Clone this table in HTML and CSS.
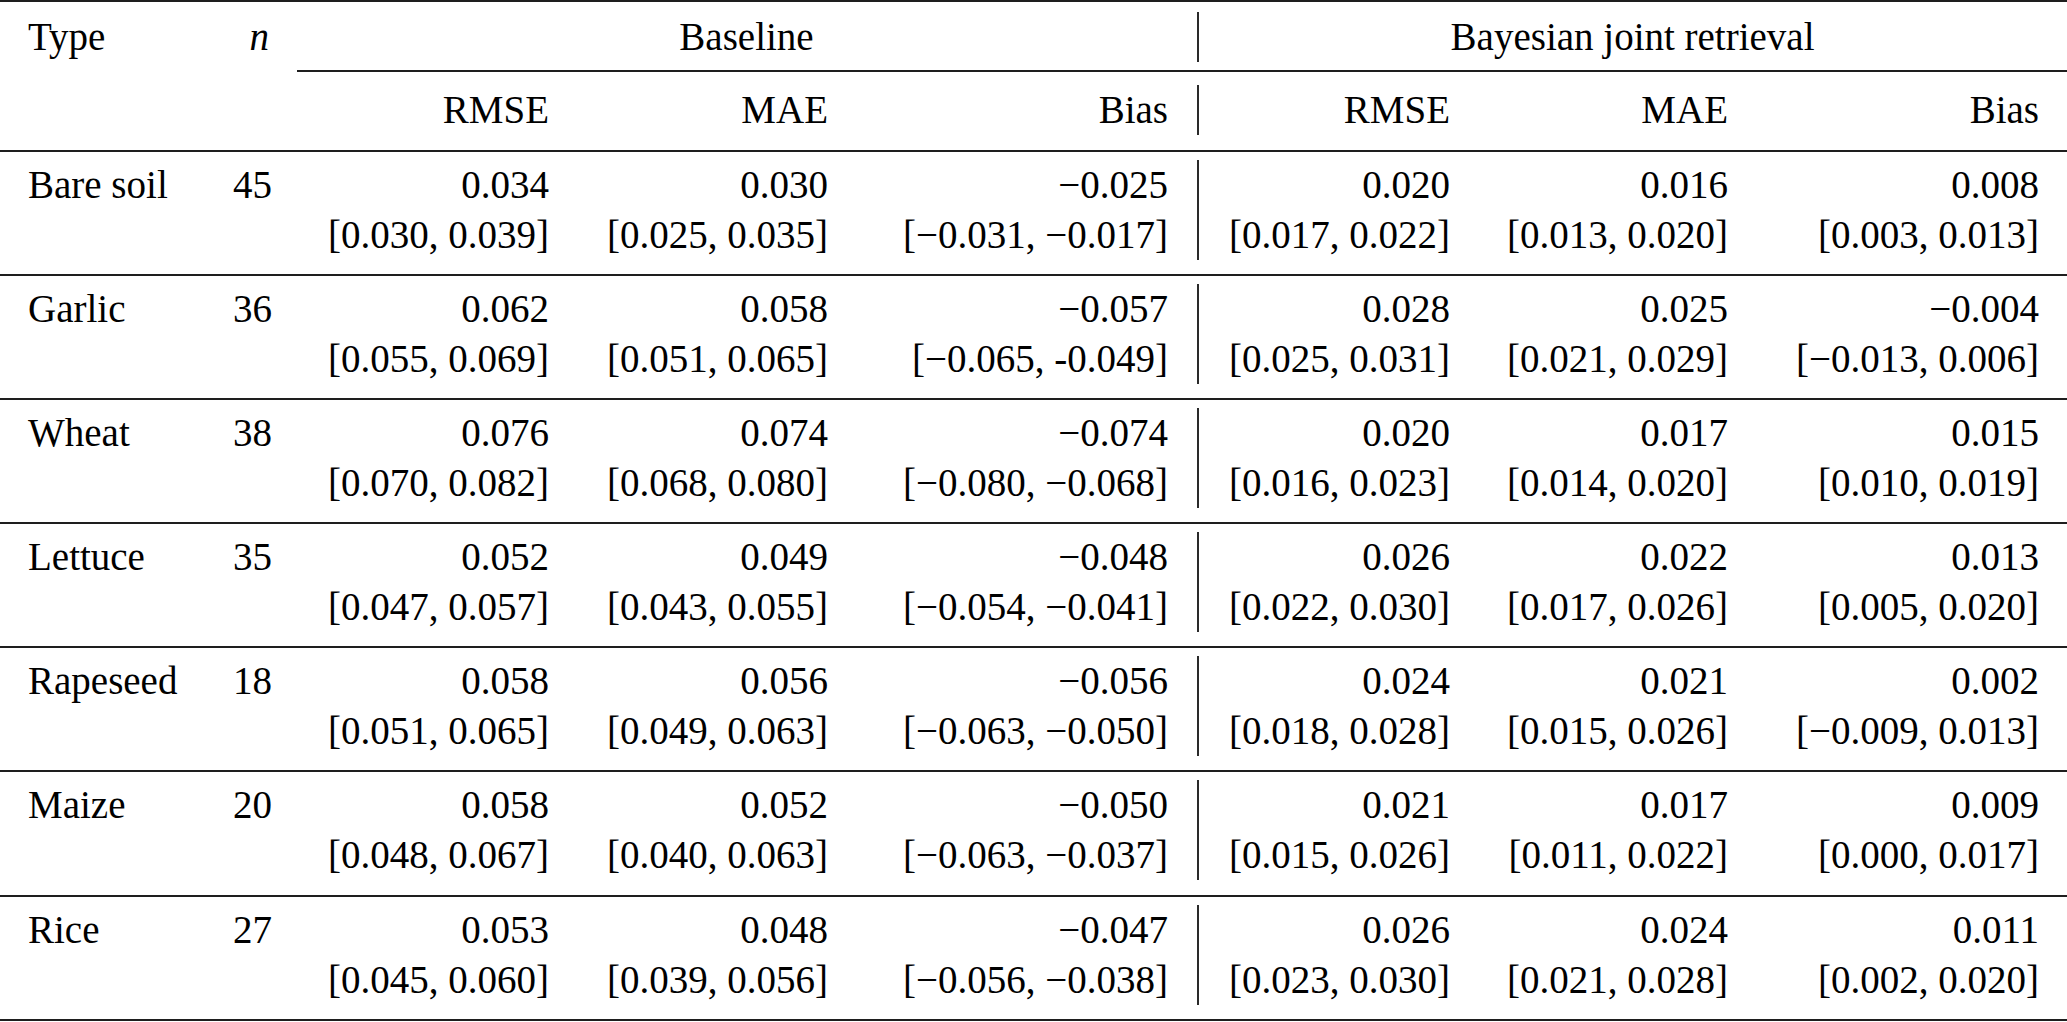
FILE: index.html
```html
<!DOCTYPE html>
<html lang="en">
<head>
<meta charset="utf-8">
<title>Retrieval accuracy by crop type</title>
<link rel="stylesheet" href="styles.css">
</head>
<body>
<table class="results">
  <colgroup>
    <col class="c-type">
    <col class="c-n">
    <col class="c-rmse">
    <col class="c-mae">
    <col class="c-bias">
    <col class="c-rmse2">
    <col class="c-mae2">
    <col class="c-bias2">
  </colgroup>
  <thead>
    <tr class="h1">
      <th class="left" rowspan="2">Type</th>
      <th class="right" rowspan="2"><i>n</i></th>
      <th class="group" colspan="3">Baseline</th>
      <th class="group sep" colspan="3"><div class="rule center">Bayesian joint retrieval</div></th>
    </tr>
    <tr class="h2">
      <th class="right">RMSE</th>
      <th class="right">MAE</th>
      <th class="right">Bias</th>
      <th class="right sep"><div class="rule">RMSE</div></th>
      <th class="right">MAE</th>
      <th class="right">Bias</th>
    </tr>
  </thead>
  <tbody>
    <tr>
      <td class="left">Bare soil</td><td class="right">45</td>
      <td class="right"><div>0.034</div><div>[0.030, 0.039]</div></td>
      <td class="right"><div>0.030</div><div>[0.025, 0.035]</div></td>
      <td class="right"><div>&minus;0.025</div><div>[&minus;0.031, &minus;0.017]</div></td>
      <td class="right sep"><div class="rule"><div>0.020</div><div>[0.017, 0.022]</div></div></td>
      <td class="right"><div>0.016</div><div>[0.013, 0.020]</div></td>
      <td class="right"><div>0.008</div><div>[0.003, 0.013]</div></td>
    </tr>
    <tr>
      <td class="left">Garlic</td><td class="right">36</td>
      <td class="right"><div>0.062</div><div>[0.055, 0.069]</div></td>
      <td class="right"><div>0.058</div><div>[0.051, 0.065]</div></td>
      <td class="right"><div>&minus;0.057</div><div>[&minus;0.065, -0.049]</div></td>
      <td class="right sep"><div class="rule"><div>0.028</div><div>[0.025, 0.031]</div></div></td>
      <td class="right"><div>0.025</div><div>[0.021, 0.029]</div></td>
      <td class="right"><div>&minus;0.004</div><div>[&minus;0.013, 0.006]</div></td>
    </tr>
    <tr>
      <td class="left">Wheat</td><td class="right">38</td>
      <td class="right"><div>0.076</div><div>[0.070, 0.082]</div></td>
      <td class="right"><div>0.074</div><div>[0.068, 0.080]</div></td>
      <td class="right"><div>&minus;0.074</div><div>[&minus;0.080, &minus;0.068]</div></td>
      <td class="right sep"><div class="rule"><div>0.020</div><div>[0.016, 0.023]</div></div></td>
      <td class="right"><div>0.017</div><div>[0.014, 0.020]</div></td>
      <td class="right"><div>0.015</div><div>[0.010, 0.019]</div></td>
    </tr>
    <tr>
      <td class="left">Lettuce</td><td class="right">35</td>
      <td class="right"><div>0.052</div><div>[0.047, 0.057]</div></td>
      <td class="right"><div>0.049</div><div>[0.043, 0.055]</div></td>
      <td class="right"><div>&minus;0.048</div><div>[&minus;0.054, &minus;0.041]</div></td>
      <td class="right sep"><div class="rule"><div>0.026</div><div>[0.022, 0.030]</div></div></td>
      <td class="right"><div>0.022</div><div>[0.017, 0.026]</div></td>
      <td class="right"><div>0.013</div><div>[0.005, 0.020]</div></td>
    </tr>
    <tr>
      <td class="left">Rapeseed</td><td class="right">18</td>
      <td class="right"><div>0.058</div><div>[0.051, 0.065]</div></td>
      <td class="right"><div>0.056</div><div>[0.049, 0.063]</div></td>
      <td class="right"><div>&minus;0.056</div><div>[&minus;0.063, &minus;0.050]</div></td>
      <td class="right sep"><div class="rule"><div>0.024</div><div>[0.018, 0.028]</div></div></td>
      <td class="right"><div>0.021</div><div>[0.015, 0.026]</div></td>
      <td class="right"><div>0.002</div><div>[&minus;0.009, 0.013]</div></td>
    </tr>
    <tr>
      <td class="left">Maize</td><td class="right">20</td>
      <td class="right"><div>0.058</div><div>[0.048, 0.067]</div></td>
      <td class="right"><div>0.052</div><div>[0.040, 0.063]</div></td>
      <td class="right"><div>&minus;0.050</div><div>[&minus;0.063, &minus;0.037]</div></td>
      <td class="right sep"><div class="rule"><div>0.021</div><div>[0.015, 0.026]</div></div></td>
      <td class="right"><div>0.017</div><div>[0.011, 0.022]</div></td>
      <td class="right"><div>0.009</div><div>[0.000, 0.017]</div></td>
    </tr>
    <tr>
      <td class="left">Rice</td><td class="right">27</td>
      <td class="right"><div>0.053</div><div>[0.045, 0.060]</div></td>
      <td class="right"><div>0.048</div><div>[0.039, 0.056]</div></td>
      <td class="right"><div>&minus;0.047</div><div>[&minus;0.056, &minus;0.038]</div></td>
      <td class="right sep"><div class="rule"><div>0.026</div><div>[0.023, 0.030]</div></div></td>
      <td class="right"><div>0.024</div><div>[0.021, 0.028]</div></td>
      <td class="right"><div>0.011</div><div>[0.002, 0.020]</div></td>
    </tr>
  </tbody>
</table>
</body>
</html>
```

FILE: styles.css
```css
html, body {
  margin: 0;
  padding: 0;
  background: #ffffff;
}

body {
  font-family: "Liberation Serif", "Times New Roman", serif;
  font-size: 39px;
  line-height: 50px;
  color: #000000;
  overflow: hidden;
}

.results {
  width: 2067px;
  table-layout: fixed;
  border-collapse: separate;
  border-spacing: 0;
}

.c-type  { width: 205px; }
.c-n     { width: 92px; }
.c-rmse  { width: 280px; }
.c-mae   { width: 279px; }
.c-bias  { width: 340px; }
.c-rmse2 { width: 282px; }
.c-mae2  { width: 278px; }
.c-bias2 { width: 311px; }

.results th,
.results td {
  font-weight: normal;
  vertical-align: top;
  padding: 0 28px;
  white-space: nowrap;
}

.left { text-align: left; }
.right { text-align: right; }
.center { text-align: center; }

/* header row 1 */
.h1 th {
  border-top: 2px solid #1e1e1e;
  padding-top: 10px;
  padding-bottom: 8px;
}
.h1 th[rowspan] {
  border-bottom: 2px solid #1e1e1e;
}
.h1 .group {
  text-align: center;
  border-bottom: 2px solid #1e1e1e;
}

/* header row 2 */
.h2 th {
  padding-top: 13px;
  padding-bottom: 15px;
  border-bottom: 2px solid #1e1e1e;
}

/* body rows */
.results tbody td {
  padding-top: 8px;
  padding-bottom: 14.1px;
  border-bottom: 2px solid #1e1e1e;
}

/* vertical separator between the two method groups */
.results .sep {
  padding-left: 0;
}
.rule {
  margin-left: 1px;
  border-left: 2px solid #2a2a2a;
  padding-left: 27px;
}
```
